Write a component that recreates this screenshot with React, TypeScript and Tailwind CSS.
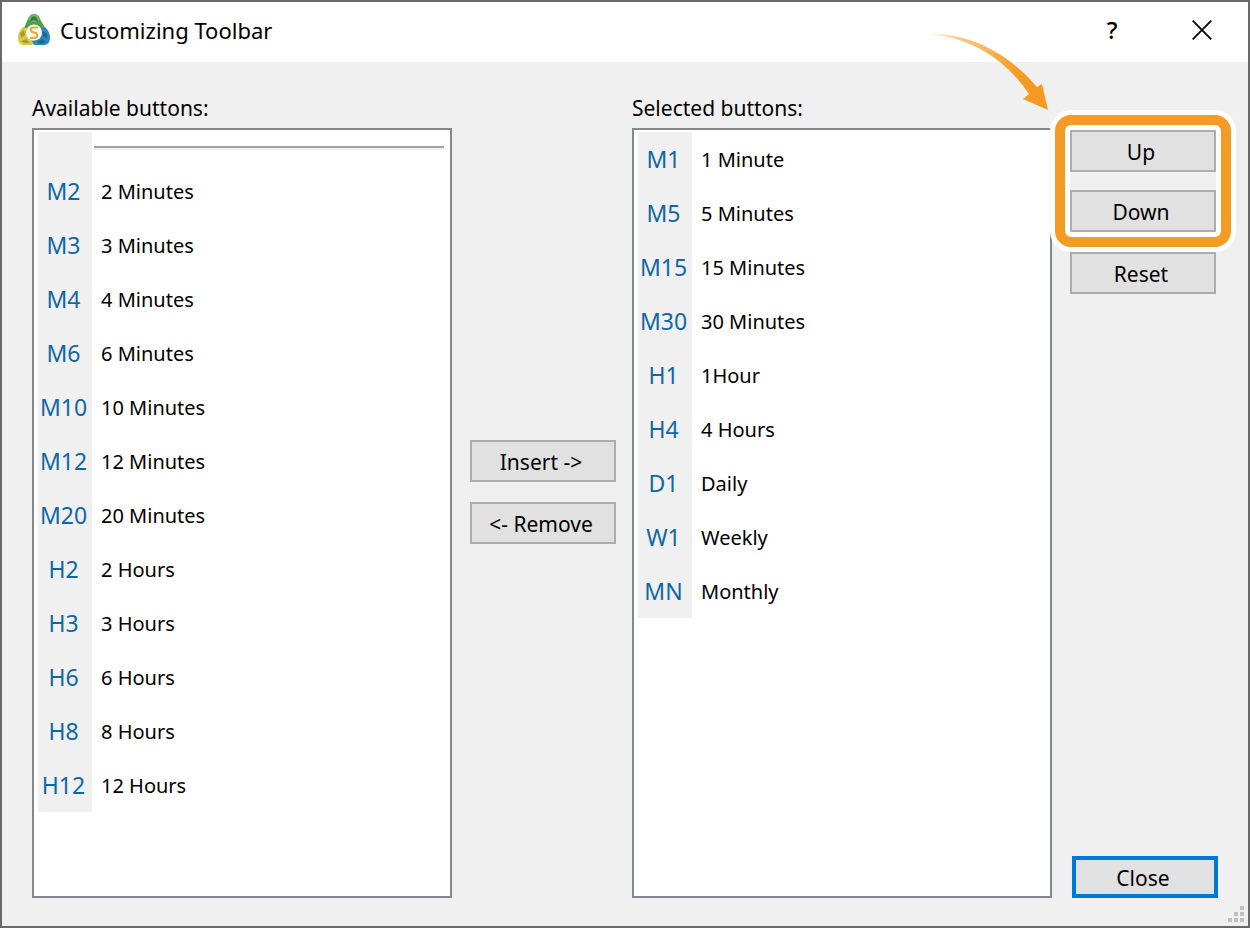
import React from 'react';

type ToolbarItem = {
  code: string;
  label: string;
};

const availableItems: ToolbarItem[] = [
  { code: 'M2', label: '2 Minutes' },
  { code: 'M3', label: '3 Minutes' },
  { code: 'M4', label: '4 Minutes' },
  { code: 'M6', label: '6 Minutes' },
  { code: 'M10', label: '10 Minutes' },
  { code: 'M12', label: '12 Minutes' },
  { code: 'M20', label: '20 Minutes' },
  { code: 'H2', label: '2 Hours' },
  { code: 'H3', label: '3 Hours' },
  { code: 'H6', label: '6 Hours' },
  { code: 'H8', label: '8 Hours' },
  { code: 'H12', label: '12 Hours' },
];

const selectedItems: ToolbarItem[] = [
  { code: 'M1', label: '1 Minute' },
  { code: 'M5', label: '5 Minutes' },
  { code: 'M15', label: '15 Minutes' },
  { code: 'M30', label: '30 Minutes' },
  { code: 'H1', label: '1Hour' },
  { code: 'H4', label: '4 Hours' },
  { code: 'D1', label: 'Daily' },
  { code: 'W1', label: 'Weekly' },
  { code: 'MN', label: 'Monthly' },
];

const AppLogo = () => (
  <svg width="32" height="32" viewBox="0 0 32 32" aria-hidden="true">
    <path d="M16 0 C19 0 21 2 22 5 L27 14 L21 15 L11 15 L6 14 L10 5 C11 2 13 0 16 0Z" fill="#4f9f48" />
    <path d="M16 0 C19 0 21 2 22 5 L19 8 L13 8 L10 5 C11 2 13 0 16 0Z" fill="#73b56b" />
    <path d="M13 4 L16 2 L19 4 L20 8 L16 6 L12 8Z" fill="#2f7f35" />
    <path d="M5 13 L11 15 L13 24 L17 28 L14 31 L5 31 C1 30 0 27 0 24 C0 19 2 16 5 13Z" fill="#d9cb3c" />
    <path d="M2 19 L6 16 L7 21 L3 24Z M3 27 L8 25 L12 29 L6 29Z" fill="#a99c32" />
    <path d="M27 13 L21 15 L20 24 L14 27 L16 31 L27 31 C31 30 32 27 32 24 C32 19 30 16 27 13Z" fill="#2f85bd" />
    <path d="M25 17 L29 20 L29 24 L25 22Z M19 28 L24 25 L28 28 L23 30Z" fill="#1668a0" />
    <circle cx="16" cy="18.5" r="8" fill="#fffdf7" />
    <path
      d="M20 13.5 H15.5 C12 13.5 12 17.8 15.5 18.3 C20.5 19 20.5 23.8 16 23.8 H12"
      fill="none"
      stroke="#eba83c"
      strokeWidth="2.2"
    />
  </svg>
);

const PointerArrow = () => (
  <svg
    className="pointer-events-none absolute right-full -top-[99px] mr-5"
    width="126"
    height="80"
    viewBox="0 0 126 80"
    aria-hidden="true"
  >
    <defs>
      <linearGradient id="arrow-fade" x1="0" y1="0" x2="1" y2="0">
        <stop offset="0" stopColor="#f59b23" stopOpacity="0" />
        <stop offset="0.3" stopColor="#f59b23" stopOpacity="0.55" />
        <stop offset="0.75" stopColor="#f59b23" />
      </linearGradient>
    </defs>
    <path
      d="M2 3 C44 1 84 22 113 56 L118 53 L124 79 L99 68 L105 63 C82 29 48 6 2 3Z"
      fill="url(#arrow-fade)"
    />
  </svg>
);

const DialogButton = ({ children }: { children: React.ReactNode }) => (
  <button
    type="button"
    className="h-[42px] w-[146px] border-2 border-[#adadad] bg-[#e1e1e1] pt-0.5 pr-1 text-[21px] leading-8"
  >
    {children}
  </button>
);

const ButtonList = ({
  id,
  title,
  items,
  withSeparator = false,
}: {
  id: string;
  title: string;
  items: ToolbarItem[];
  withSeparator?: boolean;
}) => (
  <section className="flex min-w-0 flex-1 flex-col gap-1">
    <h2 id={id} className="text-[21px] leading-8 whitespace-nowrap">{title}</h2>
    <ul
      role="listbox"
      aria-labelledby={id}
      className="flex-1 border-2 border-[#828790] bg-white pt-0.5 pl-1"
    >
      {withSeparator && (
        <li role="option" aria-label="Separator" className="flex h-8">
          <span className="w-[54px] bg-[#f0f0f0]" />
          <span className="mt-3.5 mr-1.5 ml-0.5 h-1 flex-1 border-t-2 border-b-2 border-t-[#a0a0a0] border-b-[#f0f0f0]" />
        </li>
      )}
      {items.map(({ code, label }) => (
        <li key={code} role="option" className="flex h-[54px] items-center">
          <span className="flex h-full w-[54px] items-center justify-center bg-[#f0f0f0] pr-[3px] text-[23px] text-[#1067a6]">
            {code}
          </span>
          <span className="ml-[9px] pt-0.5 text-xl">{label}</span>
        </li>
      ))}
    </ul>
  </section>
);

const App = () => {
  return (
    <div
      role="dialog"
      aria-labelledby="dialog-title"
      className="relative flex min-h-screen flex-col border-2 border-[#696969] bg-[#f0f0f0] font-['Noto_Sans',sans-serif] text-black"
    >
      <header className="flex h-[60px] items-center bg-white pr-9 pb-1 pl-4">
        <AppLogo />
        <h1 id="dialog-title" className="ml-2.5 flex-1 text-[22px]">Customizing Toolbar</h1>
        <button type="button" aria-label="Help" className="w-8 text-2xl font-medium">?</button>
        <button type="button" aria-label="Close window" className="ml-16">
          <svg width="20" height="20" viewBox="0 0 20 20" aria-hidden="true">
            <path d="M0.7 0.7 L19.3 19.3 M19.3 0.7 L0.7 19.3" stroke="#000" strokeWidth="1.8" />
          </svg>
        </button>
      </header>

      <main className="flex flex-1 px-[30px] pt-[30px] pb-7">
        <ButtonList id="available" title="Available buttons:" items={availableItems} withSeparator />

        <div className="mr-4 ml-[18px] flex flex-col justify-center gap-5 pb-1.5">
          <DialogButton>Insert -&gt;</DialogButton>
          <DialogButton>&lt;- Remove</DialogButton>
        </div>

        <ButtonList id="selected" title="Selected buttons:" items={selectedItems} />

        <div className="ml-[18px] flex w-[148px] flex-col gap-5 pt-[38px]">
          <div className="relative flex w-[146px] flex-col gap-[18px]">
            <DialogButton>Up</DialogButton>
            <DialogButton>Down</DialogButton>
            <div className="pointer-events-none absolute -inset-[15px] rounded-2xl border-10 border-[#f59b23] shadow-[0_0_0_5px_#fff,inset_0_0_0_5px_#fff]" />
            <PointerArrow />
          </div>
          <DialogButton>Reset</DialogButton>
          <button
            type="button"
            className="mt-auto h-[42px] w-[146px] self-end border-4 border-[#0078d7] bg-[#e1e1e1] pt-0.5 pr-1 text-[21px] leading-8"
          >
            Close
          </button>
        </div>
      </main>

      {/* resize grip */}
      <svg className="absolute right-1 bottom-1" width="16" height="16" viewBox="0 0 16 16" fill="#bfbfbf" aria-hidden="true">
        <path d="M12 0h4v4h-4z M6 6h4v4h-4z M12 6h4v4h-4z M0 12h4v4h-4z M6 12h4v4h-4z M12 12h4v4h-4z" />
      </svg>
    </div>
  );
};

export default App;
